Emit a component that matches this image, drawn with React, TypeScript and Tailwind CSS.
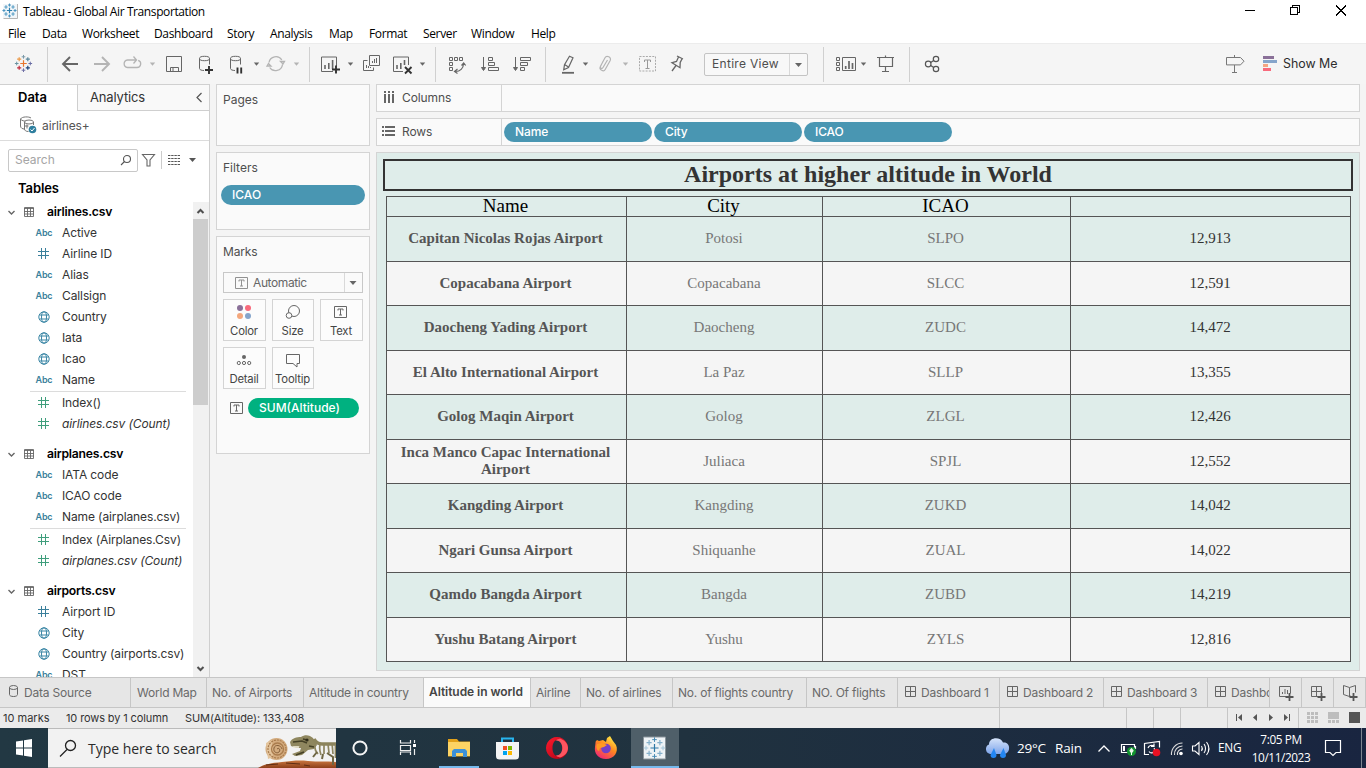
import React from "react";

type Kids = { children?: React.ReactNode };
type BoxProps = Kids & { x: number; y: number; w: number; h: number; className?: string };

/* Drawing slot whose user units are window pixels. */
function Art({ x, y, w, h, className = "", children }: BoxProps) {
  return (
    <svg width={w} height={h} viewBox={`${x} ${y} ${w} ${h}`} className={`block shrink-0 ${className}`} fill="none">
      {children}
    </svg>
  );
}

function Slot({ x, w, children }: Kids & { x: number; w: number }) {
  return (
    <Art x={x} y={44} w={w} h={40}>
      {children}
    </Art>
  );
}

const G = "#666";
const L = "#b4b4b4";

function Caret({ x, y = 64, c = G }: { x: number; y?: number; c?: string }) {
  return <path d={`M${x - 2.7} ${y - 1.5}h5.4l-2.7 3.2z`} fill={c} />;
}

function Sep({ x }: { x: number }) {
  return <path d={`M${x + 0.5} 47v35`} stroke="#d0d0d0" />;
}

function Cross({ x, y, r, c, w = 1 }: { x: number; y: number; r: number; c: string; w?: number }) {
  return <path d={`M${x - r} ${y}h${2 * r}M${x} ${y - r}v${2 * r}`} stroke={c} strokeWidth={w} />;
}

function LogoMark({ x, y, s, colors }: { x: number; y: number; s: number; colors: string[] }) {
  return (
    <g>
      <Cross x={x} y={y} r={3 * s} c={colors[0]} w={1.2} />
      <Cross x={x} y={y - 6.2 * s} r={1.7 * s} c={colors[1]} />
      <Cross x={x} y={y + 6.2 * s} r={1.7 * s} c={colors[2]} />
      <Cross x={x - 6.3 * s} y={y} r={1.7 * s} c={colors[3]} />
      <Cross x={x + 6.3 * s} y={y} r={1.7 * s} c={colors[4]} />
      <Cross x={x - 4 * s} y={y - 4 * s} r={1.9 * s} c={colors[5]} w={1.2} />
      <Cross x={x + 4 * s} y={y - 4 * s} r={1.9 * s} c={colors[6]} w={1.2} />
      <Cross x={x - 4 * s} y={y + 4 * s} r={1.9 * s} c={colors[7]} w={1.2} />
      <Cross x={x + 4 * s} y={y + 4 * s} r={1.9 * s} c={colors[8]} w={1.2} />
    </g>
  );
}

const blues = ["#2d7fb0", "#4b95c0", "#4b95c0", "#4b95c0", "#4b95c0", "#5a9fc6", "#5a9fc6", "#5a9fc6", "#5a9fc6"];
const brand = ["#e8762d", "#7b99a8", "#6f6fa5", "#6b93a0", "#6b6fa5", "#eb9a4a", "#5b879b", "#c02a3c", "#1f447a"];

function TitleBar() {
  return (
    <div className="flex h-[23px] items-center bg-white">
      <Art x={0} y={0} w={23} h={23}>
        <path d="M3 4h14v14h-14z" fill="#f2f6f9" />
        <path d="M17.5 4v14.5h-14" stroke="#b5b5b5" />
        <LogoMark x={9.5} y={10.5} s={0.88} colors={blues} />
      </Art>
      <span className="grow font-['Open_Sans',sans-serif] text-[12px] tracking-[-0.4px] text-black">Tableau - Global Air Transportation</span>
      <Art x={1240} y={0} w={126} h={23} className="[shape-rendering:crispEdges]">
        <g stroke="#000">
          <path d="M1245 10.5h10" />
          <path d="M1290.5 7.5h7v7h-7zM1292.5 7v-1.500h7v7h-1.5" />
          <path d="M1336 5.500l10 10M1346 5.500l-10 10" />
        </g>
      </Art>
    </div>
  );
}

const menus: [string, string][] = [
  ["File", "w-[34px]"],
  ["Data", "w-[40px]"],
  ["Worksheet", "w-[72px]"],
  ["Dashboard", "w-[73px]"],
  ["Story", "w-[43px]"],
  ["Analysis", "w-[59px]"],
  ["Map", "w-[40px]"],
  ["Format", "w-[54px]"],
  ["Server", "w-[48px]"],
  ["Window", "w-[60px]"],
  ["Help", "w-[40px]"],
];

function MenuBar() {
  return (
    <div className="flex h-5 items-center bg-white pt-[2px] pl-2 font-['Open_Sans',sans-serif] text-[12px] tracking-[-0.36px] text-black">
      {menus.map(([m, w]) => (
        <span key={m} className={w}>
          {m}
        </span>
      ))}
    </div>
  );
}

function Toolbar() {
  return (
    <div className="flex h-[41px] items-center border-t border-[#ececec] bg-[#f5f5f5]">
      <Slot x={0} w={48}>
        <LogoMark x={23.500} y={63.5} s={1.08} colors={brand} />
        <Sep x={47} />
      </Slot>
      <Slot x={48} w={38}>
        <path d="M78 64H63M70 57l-7 7 7 7" stroke={G} strokeWidth="1.9" />
      </Slot>
      <Slot x={86} w={30}>
        <path d="M94 64h15M102 57l7 7-7 7" stroke={L} strokeWidth="1.9" />
      </Slot>
      <Slot x={116} w={46}>
        <path d="M131 60h-3.500a4 3.800 0 0 0 0 7.500h9.500a3.700 3.700 0 0 0 1.200-7.200M129 60h7M133.500 56.500l3 3.500-3 3.500" stroke={L} strokeWidth="1.3" />
        <Caret x={152.500} c={L} />
      </Slot>
      <Slot x={162} w={30}>
        <path d="M166.500 56.500h15v15h-15zM170.500 71v-3.500h8v4M173 68v3" stroke={G} />
      </Slot>
      <Slot x={192} w={30}>
        <ellipse cx="204.500" cy="58.500" rx="5" ry="2.200" stroke={G} />
        <path d="M199.500 58.500v10c0 1.200 2 2 4.500 2M209.500 58.500v6" stroke={G} />
        <path d="M205 70h8M209 66v8" stroke="#333" strokeWidth="1.900" />
      </Slot>
      <Slot x={222} w={40}>
        <ellipse cx="235.500" cy="58.500" rx="5" ry="2.200" stroke={G} />
        <path d="M230.500 58.500v10c0 1.200 2 2 4.500 2M240.500 58.500v6" stroke={G} />
        <path d="M237.500 67.500v6M241.200 67.500v6" stroke="#333" strokeWidth="1.900" />
        <Caret x={256.500} />
      </Slot>
      <Slot x={262} w={48}>
        <path d="M269 62.500a7 7 0 0 1 12.800-2.500M282.500 64.500a7 7 0 0 1-12.800 3M280.500 61.500h4l-1.500 2.500zM267 66h4l-2.500-2.500z" stroke={L} strokeWidth="1.300" />
        <Caret x={296.500} c={L} />
        <Sep x={309} />
      </Slot>
      <Slot x={310} w={48}>
        <path d="M333 71.500h-11.500v-14.500h15v9" stroke={G} />
        <path d="M325 69v-4M328.800 69v-6M332.600 69v-9" stroke={G} strokeWidth="1.600" />
        <path d="M332 69.500h8M336 65.500v8" stroke="#333" strokeWidth="1.900" />
        <Caret x={350.500} />
      </Slot>
      <Slot x={358} w={30}>
        <path d="M369.500 55.500h10v10h-10zM367.500 60.500h-4v10h10v-3" stroke={G} />
        <path d="M372.500 63v-2M374.500 63v-4M376.500 63v-5M366.500 68v-3M368.500 68v-2M370.500 68v-1" stroke={G} />
      </Slot>
      <Slot x={388} w={48}>
        <path d="M403 71.500h-9.500v-14.500h15v8" stroke={G} />
        <path d="M397 69v-4M400.800 69v-6M404.500 65v-5" stroke={G} strokeWidth="1.600" />
        <path d="M405 67l6.500 6.500M411.500 67l-6.500 6.500" stroke="#333" strokeWidth="1.900" />
        <Caret x={422.500} />
        <Sep x={435} />
      </Slot>
      <Slot x={436} w={36}>
        <path d="M449.500 57.500h3v3h-3zM454.500 57.500h3v3h-3zM459.500 57.500h3v3h-3zM449.500 62.500h3v3h-3zM449.500 67.500h3v3h-3z" stroke={G} />
        <path d="M455.500 71.500c4.500 0 8-3 8-8M457.500 69l-3 2.500 3 2M461.500 65.500l2.200-2.500 2 2.500" stroke={G} strokeWidth="1.200" />
      </Slot>
      <Slot x={472} w={34}>
        <path d="M483.500 57v13M481.500 67.500h4l-2 3z" stroke={G} fill={G} />
        <path d="M488.500 57.500h4v3h-4zM488.500 62.500h6v3h-6zM488.500 67.500h10v3h-10z" stroke={G} />
      </Slot>
      <Slot x={506} w={40}>
        <path d="M515.500 57v13M513.500 67.500h4l-2 3z" stroke={G} fill={G} />
        <path d="M520.500 57.500h10v3h-10zM520.500 62.500h7v3h-7zM520.500 67.500h4v3h-4z" stroke={G} />
        <Sep x={545} />
      </Slot>
      <Slot x={546} w={48}>
        <path d="M562 72.800h12" stroke={G} strokeWidth="1.800" />
        <path d="M569.500 56.200l3.500 1.600-4.500 9.700-4.800 2.300.8-5zM564.500 64.500l4 2.500" stroke={G} strokeWidth="1.200" />
        <Caret x={585.500} />
      </Slot>
      <Slot x={594} w={38}>
        <path d="M607.500 60l-4.500 7.500c-1 1.800-3.400.5-2.500-1.200l4.500-8.500c1.600-3 6.800-.5 5.200 2.700l-5 9c-1.500 2.700-6.200.3-5-2.500l2.500-5" stroke={L} strokeWidth="1.200" />
        <Caret x={625.500} c={L} />
      </Slot>
      <Slot x={632} w={32}>
        <path d="M639.500 56.500h16v14.500h-16z" stroke="#aaa" strokeDasharray="2 1.200" />
        <path d="M644.500 62v-2h6v2M647.500 60v8M645.500 68.500h4" stroke="#999" />
      </Slot>
      <Slot x={664} w={40}>
        <path d="M677 56l6 3M678.500 57l-2 4.500-4.500 1.200 8 5 .2-5.200 2-4M676 65.500l-4 5.500" stroke={G} strokeWidth="1.300" />
      </Slot>
      <div className="flex h-[23px] w-[104px] shrink-0 items-center rounded-[2px] border border-[#c4c4c4] bg-[#f8f8f8] font-['Inter',sans-serif] text-[12px] text-[#4e4e4e]">
        <span className="w-[83px] pl-[7px] tracking-[0.3px] whitespace-nowrap">Entire View</span>
        <Art x={788} y={53} w={18} h={21}>
          <path d="M789.500 53v21" stroke="#d9d9d9" />
          <path d="M795 62h7l-3.500 4z" fill={G} />
        </Art>
      </div>
      <Slot x={808} w={62}>
        <Sep x={823} />
        <path d="M836.500 57.500h3v3h-3zM836.500 62.500h3v3h-3zM836.500 67.500h3v3h-3zM842.500 57.500h13v13h-13z" stroke={G} />
        <path d="M845.700 69v-3M849 69v-8M852.500 69v-6" stroke={G} strokeWidth="1.700" />
        <Caret x={863.500} />
      </Slot>
      <Slot x={870} w={40}>
        <path d="M877 57.500h17M879.500 57.500v9h13v-9M885.500 55.500v2M885.500 66.500v5M882 71.500h7" stroke={G} strokeWidth="1.200" />
        <Sep x={909} />
      </Slot>
      <Slot x={910} w={40}>
        <g stroke="#555" strokeWidth="1.200">
          <circle cx="928.200" cy="64" r="2.800" />
          <circle cx="936" cy="59" r="2.700" />
          <circle cx="936" cy="69" r="2.700" />
          <path d="M930.700 62.500l3-2M930.700 65.500l3 2" />
        </g>
      </Slot>
      <div className="grow" />
      <Slot x={1216} w={67}>
        <path d="M1234.500 55v2M1226.500 57.500h14l3.500 3.700-3.500 3.700h-14zM1234.500 65v7M1232 72.500h5" stroke="#777" />
        <path d="M1263 56h11v3h-11z" fill="#8a7098" />
        <path d="M1263 60h14v3h-14z" fill="#86a5cb" />
        <path d="M1263 64h5v3h-5z" fill="#f4a582" />
        <path d="M1263 68h8v3h-8z" fill="#f86a7c" />
      </Slot>
      <span className="w-[83px] font-['Inter',sans-serif] text-[12.400px] text-[#2c2c2c]">Show Me</span>
    </div>
  );
}

type Kind = "abc" | "num" | "calc" | "geo";

function FieldIcon({ kind }: { kind: Kind }) {
  if (kind === "abc") return <span className="text-[9px] font-semibold tracking-[-0.2px] text-[#3a7f9b]">Abc</span>;
  if (kind === "geo")
    return (
      <svg width="12" height="12" viewBox="0 0 12 12" fill="none" stroke="#3a86a5" className="mr-px">
        <circle cx="6" cy="6" r="5.200" />
        <ellipse cx="6" cy="6" rx="2.500" ry="5.200" />
        <path d="M1.500 4h9M1.500 8h9" />
      </svg>
    );
  return (
    <svg width="11" height="11" viewBox="0 0 11 11" fill="none" stroke={kind === "num" ? "#3a7f9b" : "#3f9e7c"} className="mr-px">
      <path d="M3.500 0v11M7.500 0v11M0 3.500h11M0 7.500h11" />
    </svg>
  );
}

function Field({ kind, name, italic }: { kind: Kind; name: string; italic?: boolean }) {
  return (
    <div className="flex h-[21px] items-center">
      <span className="ml-[34px] flex w-5 shrink-0 justify-center">
        <FieldIcon kind={kind} />
      </span>
      <span className={`pl-2 tracking-[-0.11px] whitespace-nowrap text-[#333] ${italic ? "italic" : ""}`}>{name}</span>
    </div>
  );
}

type Group = { name: string; fields: [Kind, string][]; calcs: string[] };

const groups: Group[] = [
  {
    name: "airlines.csv",
    fields: [
      ["abc", "Active"],
      ["num", "Airline ID"],
      ["abc", "Alias"],
      ["abc", "Callsign"],
      ["geo", "Country"],
      ["geo", "Iata"],
      ["geo", "Icao"],
      ["abc", "Name"],
    ],
    calcs: ["Index()", "airlines.csv (Count)"],
  },
  {
    name: "airplanes.csv",
    fields: [
      ["abc", "IATA code"],
      ["abc", "ICAO code"],
      ["abc", "Name (airplanes.csv)"],
    ],
    calcs: ["Index (Airplanes.Csv)", "airplanes.csv (Count)"],
  },
  {
    name: "airports.csv",
    fields: [
      ["num", "Airport ID"],
      ["geo", "City"],
      ["geo", "Country (airports.csv)"],
      ["abc", "DST"],
    ],
    calcs: [],
  },
];

function DataPane() {
  return (
    <div className="flex w-[210px] shrink-0 flex-col border-r border-[#cfcfcf] bg-white text-[12px]">
      <div className="flex h-[27px] shrink-0 border-t border-[#d0d0d0]">
        <div className="flex w-[77px] items-center justify-center pr-3 text-[13px] font-semibold text-black">Data</div>
        <div className="flex grow items-center justify-between border-b border-l border-[#cfcfcf] bg-[#f9f9f9] pr-[6px] pl-3 text-[13px] tracking-[-0.15px] text-[#333]">
          Analytics
          <svg width="8" height="11" viewBox="0 0 8 11" fill="none" stroke="#555" strokeWidth="1.200">
            <path d="M6.500 1L2 5.500 6.500 10" />
          </svg>
        </div>
      </div>
      <div className="flex h-[30px] shrink-0 items-center border-b border-[#dcdcdc] tracking-[-0.1px] text-[#555]">
        <Art x={0} y={111} w={42} h={29}>
          <g stroke="#777">
            <path d="M20.500 119v7c0 2 2 3 4 3M31 118c-2-1.600-9-1.600-10.500 1 1.500 2 4 2 5 2" />
            <ellipse cx="29" cy="122" rx="4.500" ry="2" />
            <path d="M24.500 122v7c0 1.500 1.500 2.500 4 2.500M33.500 122v3M24.500 126h4M27 124.500v4" />
          </g>
          <circle cx="32.500" cy="129.500" r="3.800" fill="#2f7f9f" />
          <path d="M30.500 129.500l1.500 1.500 2.500-3" stroke="#fff" />
        </Art>
        airlines+
      </div>
      <div className="flex h-[38px] shrink-0 items-center pl-2">
        <div className="flex h-[23px] w-[130px] items-center justify-between rounded-[2px] border border-[#c8c8c8] pr-1 pl-[6px] text-[#a5a5a5]">
          Search
          <svg width="14" height="14" viewBox="0 0 14 14" fill="none" stroke="#555" strokeWidth="1.100">
            <circle cx="8" cy="6" r="3.500" />
            <path d="M5.500 8.500L2 12" />
          </svg>
        </div>
        <Art x={138} y={148} w={68} h={24}>
          <path d="M142.500 154.500h12l-4.500 5.500v6h-3v-6z" stroke="#666" strokeWidth="1.100" />
          <path d="M161.500 151v18" stroke="#ccc" />
          <path d="M168 155.500h12M168 158.500h12M168 161.500h12M168 164.500h12" stroke="#555" strokeDasharray="2.400 .8" />
          <path d="M189 158h7l-3.500 4z" fill="#555" />
        </Art>
      </div>
      <div className="h-[23px] shrink-0 pl-[18px] text-[13px] leading-[19px] font-semibold tracking-[-0.1px] text-black">Tables</div>
      <div className="flex min-h-0 grow">
        <div className="w-[193px] shrink-0 overflow-hidden">
          {groups.map((g) => (
            <div key={g.name} className="pb-[10px]">
              <div className="flex h-5 items-center text-[12.200px] font-semibold tracking-[-0.22px] text-black">
                <svg width="47" height="20" viewBox="0 0 47 20" fill="none" stroke="#666" className="shrink-0">
                  <path d="M8.500 9l3 3 3-3" strokeWidth="1.400" />
                  <path d="M24.500 5.500h9v9h-9zM24 6.500h10M24 9.500h10M24 12h10M27.500 6v8.500M30.500 6v8.500" strokeWidth=".9" />
                </svg>
                {g.name}
              </div>
              {g.fields.map(([k, n]) => (
                <Field key={n} kind={k} name={n} />
              ))}
              {g.calcs.length > 0 && <div className="ml-[30px] h-[2px] w-[156px] border-b border-[#dcdcdc]" />}
              {g.calcs.map((n, i) => (
                <Field key={n} kind="calc" name={n} italic={i === 1} />
              ))}
            </div>
          ))}
        </div>
        <div className="flex w-4 flex-col bg-[#f1f1f1]">
          <svg width="16" height="17" viewBox="0 0 16 17" fill="none" stroke="#505050" strokeWidth="2">
            <path d="M4.500 11L7.500 8l3 3" />
          </svg>
          <div className="h-[186px] w-[15px] bg-[#cdcdcd]" />
          <div className="grow" />
          <svg width="16" height="17" viewBox="0 0 16 17" fill="none" stroke="#505050" strokeWidth="2">
            <path d="M4.500 7L7.500 10l3-3" />
          </svg>
        </div>
      </div>
    </div>
  );
}

function TBox() {
  return (
    <svg width="13" height="12" viewBox="0 0 13 12" fill="none" stroke="#666" className="shrink-0">
      <path d="M.5.5h12v11h-12zM4 4.500v-1.500h5v1.500M6.500 3v6M5 9h3" />
    </svg>
  );
}

function MarkButton({ label, children }: Kids & { label: string }) {
  return (
    <div className="flex h-[42px] flex-col items-center justify-end border border-[#d4d4d4] bg-[#fcfcfc] pr-px pb-[2px] text-[11.300px] leading-[14px] tracking-[-0.2px] text-[#444]">
      <svg width="18" height="18" viewBox="0 0 18 18" fill="none" stroke="#666" className="mb-[3px]">
        {children}
      </svg>
      {label}
    </div>
  );
}

function Shelves() {
  return (
    <div className="ml-[6px] flex w-[154px] shrink-0 flex-col gap-[6px] text-[12px] text-[#4e4e4e]">
      <div className="h-[62px] border border-[#d4d4d4] bg-[#fafafa] pt-[6px] pl-[6px]">Pages</div>
      <div className="h-[78px] border border-[#d4d4d4] bg-[#fafafa] pt-[6px]">
        <div className="h-[26px] pl-[6px]">Filters</div>
        <div className="ml-1 h-5 w-[144px] rounded-full bg-[#4996b2] pl-[11px] text-[12px] leading-[20px] font-medium text-white">ICAO</div>
      </div>
      <div className="h-[218px] border border-[#d4d4d4] bg-[#fafafa] pt-[6px] pl-[6px]">
        <div className="h-[29px] tracking-[-0.15px]">Marks</div>
        <div className="mb-[6px] flex h-[21px] w-[140px] items-center border border-[#c8c8c8] pl-[11px] text-[#666]">
          <span className="mr-[5px] opacity-70">
            <TBox />
          </span>
          <span className="w-[91px] tracking-[-0.4px]">Automatic</span>
          <svg width="18" height="19" viewBox="0 0 18 19" className="shrink-0">
            <path d="M.5 0v19" stroke="#d9d9d9" />
            <path d="M5.500 8h7l-3.500 4z" fill="#666" />
          </svg>
        </div>
        <div className="grid w-[140px] grid-cols-[43px_42px_43px] gap-x-[6px] gap-y-[6px]">
          <MarkButton label="Color">
            <g stroke="none">
              <circle cx="5" cy="5" r="3" fill="#8a7098" />
              <circle cx="13" cy="5" r="3" fill="#f86a7c" />
              <circle cx="5" cy="13" r="3" fill="#f4a77c" />
              <circle cx="13" cy="13" r="3" fill="#86a5cb" />
            </g>
          </MarkButton>
          <MarkButton label="Size">
            <circle cx="10" cy="8" r="5.500" />
            <circle cx="5" cy="12.500" r="2.800" fill="#fcfcfc" />
          </MarkButton>
          <MarkButton label="Text">
            <path d="M2.500 3.500h12v11h-12zM6 7.500v-1.500h5v1.500M8.500 6v6M7 12h3" />
          </MarkButton>
          <MarkButton label="Detail">
            <circle cx="9" cy="6" r="2" fill="#666" stroke="none" />
            <circle cx="3.800" cy="12" r="1.600" />
            <circle cx="9" cy="12" r="1.600" />
            <circle cx="14.200" cy="12" r="1.600" />
          </MarkButton>
          <MarkButton label="Tooltip">
            <path d="M2.500 3.500h13v9h-2.500v3.500l-4-3.500h-6.500z" />
          </MarkButton>
        </div>
        <div className="mt-[9px] flex h-5 items-center pl-[7px]">
          <TBox />
          <div className="ml-[5px] h-5 w-[111px] rounded-full bg-[#00b180] pl-[11px] leading-[20px] font-medium whitespace-nowrap text-white">SUM(Altitude)</div>
        </div>
      </div>
    </div>
  );
}

const rows: string[][] = [
  ["Capitan Nicolas Rojas Airport", "Potosi", "SLPO", "12,913"],
  ["Copacabana Airport", "Copacabana", "SLCC", "12,591"],
  ["Daocheng Yading Airport", "Daocheng", "ZUDC", "14,472"],
  ["El Alto International Airport", "La Paz", "SLLP", "13,355"],
  ["Golog Maqin Airport", "Golog", "ZLGL", "12,426"],
  ["Inca Manco Capac International Airport", "Juliaca", "SPJL", "12,552"],
  ["Kangding Airport", "Kangding", "ZUKD", "14,042"],
  ["Ngari Gunsa Airport", "Shiquanhe", "ZUAL", "14,022"],
  ["Qamdo Bangda Airport", "Bangda", "ZUBD", "14,219"],
  ["Yushu Batang Airport", "Yushu", "ZYLS", "12,816"],
];

function Viz() {
  return (
    <div className="h-[519px] border border-[#d4d4d4] bg-[#dfedea] px-[6px] pt-[6px] font-['Liberation_Serif',serif]">
      <div className="h-8 w-[970px] border-2 border-[#333] text-center text-[24px] leading-[27px] font-bold text-[#333]">Airports at higher altitude in World</div>
      <div className="mt-[5px] ml-[3px] w-[965px] border-r border-b border-[#555]">
        <div className="grid h-5 grid-cols-[240px_196px_248px_280px] text-center text-[19px] leading-[17px] text-black">
          {["Name", "City", "ICAO", ""].map((h, i) => (
            <div key={i} className="border-t border-l border-[#555] pr-[2px]">
              {h}
            </div>
          ))}
        </div>
        {rows.map((r, i) => (
          <div
            key={r[0]}
            className={`grid grid-cols-[240px_196px_248px_280px] text-center text-[15px] leading-[17px] ${i % 2 === 0 ? "h-[45px]" : "h-[44px] bg-[#f5f5f5]"}`}
          >
            <div className={`flex items-center justify-center border-t border-l border-[#555] pr-[14px] pl-3 font-bold text-[#555] ${i % 2 === 0 ? "pb-[2px]" : i === 5 ? "pb-px" : ""}`}>
              {r[0]}
            </div>
            <div className={`flex items-center justify-center border-t border-l border-[#555] pr-px text-[#777] ${i % 2 === 0 ? "pb-[2px]" : ""}`}>{r[1]}</div>
            <div className={`flex items-center justify-center border-t border-l border-[#555] pr-[2px] text-[#777] ${i % 2 === 0 ? "pb-[2px]" : ""}`}>{r[2]}</div>
            <div className={`flex items-center justify-center border-t border-l border-[#555] pr-px text-[#333] ${i % 2 === 0 ? "pb-[2px]" : ""}`}>{r[3]}</div>
          </div>
        ))}
      </div>
    </div>
  );
}

function Worksheet() {
  return (
    <div className="ml-[6px] flex w-[984px] shrink-0 flex-col gap-[6px] text-[12px] text-[#4e4e4e]">
      <div className="flex h-7 border border-[#d4d4d4] bg-[#fafafa]">
        <div className="flex w-[125px] items-center border-r border-[#d4d4d4] tracking-[-0.1px]">
          <Art x={377} y={85} w={25} h={26}>
            <path d="M385 91v12M389 91v12M393 91v12" stroke="#666" strokeWidth="2" />
            <path d="M383 93.500h12" stroke="#fafafa" />
          </Art>
          Columns
        </div>
      </div>
      <div className="flex h-7 items-center border border-[#d4d4d4] bg-[#fafafa]">
        <div className="flex h-full w-[125px] items-center border-r border-[#d4d4d4] tracking-[-0.1px]">
          <Art x={377} y={119} w={25} h={26}>
            <path d="M382 127h13M382 131h13M382 135h13" stroke="#666" strokeWidth="2" />
            <path d="M384.500 126v10" stroke="#fafafa" />
          </Art>
          Rows
        </div>
        <div className="flex gap-[2px] pl-[2px] font-medium text-white">
          {["Name", "City", "ICAO"].map((p) => (
            <div key={p} className="h-5 w-[148px] rounded-full bg-[#4996b2] pl-[11px] leading-[19px] tracking-[-0.1px]">
              {p}
            </div>
          ))}
        </div>
      </div>
      <Viz />
    </div>
  );
}

function GridIcon() {
  return (
    <svg width="11" height="11" viewBox="0 0 11 11" fill="none" stroke="#666" className="mr-[5px] mb-[2px] shrink-0">
      <path d="M.5.5h10v10h-10zM5.500 0v11M0 5.500h11" />
    </svg>
  );
}

const tabs: [string, string][] = [
  ["World Map", "w-[76px]"],
  ["No. of Airports", "w-[97px]"],
  ["Altitude in country", "w-[120px]"],
  ["Altitude in world", "w-[107px]"],
  ["Airline", "w-[50px]"],
  ["No. of airlines", "w-[92px]"],
  ["No. of flights country", "w-[134px]"],
  ["NO. Of flights", "w-[91px]"],
];

const dashboards: [string, string][] = [
  ["Dashboard 1", "w-[102px]"],
  ["Dashboard 2", "w-[104px]"],
  ["Dashboard 3", "w-[104px]"],
  ["Dashboard 4", "w-[62px]"],
];

function SheetTabs() {
  return (
    <div className="flex h-[31px] shrink-0 border-y border-[#c6c6c6] bg-[#e6e6e6] text-[12px] whitespace-nowrap text-[#6a6a6a]">
      <div className="flex w-[131px] items-center border-r border-[#c6c6c6] pl-[9px] tracking-[-0.2px]">
        <svg width="9" height="12" viewBox="0 0 9 12" fill="none" stroke="#666" className="mr-[6px] mb-[3px]">
          <ellipse cx="4.500" cy="2.500" rx="4" ry="2" />
          <path d="M.5 2.500v7c0 1.200 1.500 2 4 2s4-.8 4-2v-7" />
        </svg>
        Data Source
      </div>
      {tabs.map(([t, w], i) => (
        <div
          key={t}
          className={`flex shrink-0 items-center border-r border-[#c6c6c6] ${i === 0 ? "pl-[6px]" : "pl-[5px]"} ${w} ${
            i === 3 ? "bg-[#fafafa] pb-[2px] font-semibold tracking-[-0.06px] text-[#444]" : "tracking-[-0.22px]"
          }`}
        >
          {t}
        </div>
      ))}
      {dashboards.map(([t, w]) => (
        <div key={t} className={`flex shrink-0 items-center overflow-hidden border-r border-[#c6c6c6] pl-[7px] tracking-[-0.22px] ${w}`}>
          <GridIcon />
          {t}
        </div>
      ))}
      <Art x={1270} y={678} w={96} h={29}>
        <g stroke="#666">
          <path d="M1301.500 678v29M1333.500 678v29M1365.500 678v29" stroke="#c6c6c6" />
          <path d="M1288 696.500h-8.500v-10h11v7M1282.500 694v-2M1285 694v-5M1287.500 694v-4" />
          <path d="M1320 696.500h-8.500v-10h10v7M1311.500 691.500h10M1316.500 686.500v10" />
          <path d="M1351 696l-1.500.5-6-2v-9l6 2 6-2v7M1349.500 687.500v9" />
          <path d="M1285.500 697h8M1289.500 693v8M1317.500 697h8M1321.500 693v8M1349.500 697h8M1353.500 693v8" stroke="#555" strokeWidth="1.800" />
        </g>
      </Art>
    </div>
  );
}

function StatusBar() {
  return (
    <div className="flex h-5 shrink-0 items-center bg-[#ebebeb] pl-[3px] text-[11px] whitespace-nowrap text-[#333]">
      <span className="w-[63px]">10 marks</span>
      <span className="w-[119px] tracking-[-0.12px]">10 rows by 1 column</span>
      <span className="grow tracking-[-0.08px]">SUM(Altitude): 133,408</span>
      <Art x={990} y={708} w={376} h={20}>
        <path d="M999.500 708v20M1126.500 708v20M1153.500 708v20M1180.500 708v20M1227.500 708v20M1298.500 708v20" stroke="#c6c6c6" />
        <g fill="#555">
          <path d="M1236 714h1v7h-1zM1242 714v7l-4-3.500zM1257 714v7l-4-3.500zM1269 714v7l4-3.500zM1284 714v7l4-3.500zM1289 714h1v7h-1z" />
          <path d="M1349 712h11v11h-11z" />
        </g>
        <g fill="#bdbdbd">
          <path d="M1307 712h3v3h-3zM1311 712h3v3h-3zM1315 712h3v3h-3zM1307 716h3v3h-3zM1311 716h3v3h-3zM1315 716h3v3h-3zM1307 720h3v3h-3zM1311 720h3v3h-3zM1315 720h3v3h-3z" />
          <path d="M1328 712h11v7h-11zM1328 720h3v3h-3zM1332 720h3v3h-3zM1336 720h3v3h-3z" />
        </g>
      </Art>
    </div>
  );
}

function SearchArt() {
  return (
    <Art x={258} y={729} w={78} h={39}>
      <defs>
        <linearGradient id="rock" x1="0" y1="0" x2="0" y2="1">
          <stop offset="0" stopColor="#c9763f" />
          <stop offset="1" stopColor="#8c3f1a" />
        </linearGradient>
      </defs>
      <path d="M258 768c6-4 14-5 24-6s16-2 26-1 18 0 28 1v6z" fill="url(#rock)" />
      <path d="M266 765l12-1M286 763l14 1M304 765l6 1" stroke="#5e2c12" />
      <circle cx="276.500" cy="749" r="11" fill="#d3ab7e" />
      <path d="M266 743l6-3 1 17-5 2z" fill="#e3c49c" />
      <circle cx="277" cy="749" r="9" stroke="#a87a4c" strokeWidth="1.200" strokeDasharray="2 1" />
      <circle cx="277.500" cy="749" r="6" stroke="#aa7c4d" strokeWidth="1.300" />
      <path d="M277 749c2-2 4 1 2 3s-6 0-5-4 7-3 8 1" stroke="#86603a" />
      <path d="M290 742c2-4 7-5 11-5 4-3 9-2 12 1l4 7-3 4-6 1c-2 2-4 3-6 5l-7 1-3-2 8-3 1-3-5 0-5-2z" fill="#8f875f" />
      <path d="M293 742l9-1 5 2M296 755l8-3M303 739l4 1M309 746l5 1" stroke="#454126" strokeWidth="1.500" />
      <circle cx="307" cy="740" r="1.600" fill="#2e2b18" />
      <path d="M293 746l1 2 1-2 1 2 1-2 1 2 1-2" stroke="#f2eedc" />
      <path d="M314 739c2 4 4 5 8 5h14" stroke="#8c845c" strokeWidth="3.500" />
      <path d="M316 743c-2 4-1 8 2 11M320 745c-1 4 0 7 1 10M324 745v9M328 744l1 9M332 743l1 11M335.500 743v15" stroke="#8d855f" strokeWidth="1.700" />
      <path d="M317 752l-4 5M327 753l6 4 0 8M323 754l-1 5" stroke="#6f6744" strokeWidth="2" />
    </Art>
  );
}

function TaskbarApps() {
  return (
    <Art x={336} y={728} w={343} h={40}>
      <defs>
        <linearGradient id="opera" x1="0" y1="0" x2="1" y2="1">
          <stop offset="0" stopColor="#ff1b2d" />
          <stop offset="1" stopColor="#a70014" />
        </linearGradient>
        <linearGradient id="fox" x1="0.800" y1="0" x2="0.200" y2="1">
          <stop offset="0" stopColor="#fff04a" />
          <stop offset=".45" stopColor="#ff8a1e" />
          <stop offset="1" stopColor="#f0207a" />
        </linearGradient>
      </defs>
      <circle cx="360" cy="748" r="6.600" stroke="#f5f5f5" strokeWidth="2" />
      <path d="M400.500 740v3h10v-3M400.500 755v-3h10v3M400.500 745.500h10v5h-10zM414.500 740v3M414.500 749v6" stroke="#eee" strokeWidth="1.200" />
      <path d="M413 744h3v3h-3z" fill="#fff" />
      <path d="M448 739h9l2 2.500h11v15h-22z" fill="#e2a11a" />
      <path d="M448 742h22v14h-22z" fill="#fcd364" />
      <path d="M452 757v-6l2-2h11l2 2v6h-4v-4h-7v4z" fill="#3d91d8" />
      <path d="M502 743v-4.500h11v4.500" stroke="#28b5ef" strokeWidth="2" />
      <path d="M496 742h23v14a3.500 3.500 0 0 1-3.500 3.500h-16a3.500 3.500 0 0 1-3.500-3.500z" fill="#f4f4f4" />
      <path d="M503 746h4v4h-4z" fill="#f25022" />
      <path d="M508 746h4v4h-4z" fill="#7fba00" />
      <path d="M503 751h4v4h-4z" fill="#00a4ef" />
      <path d="M508 751h4v4h-4z" fill="#ffb900" />
      <path d="M557 737a11 11 0 1 0 .01 0zM557.500 740c3 0 4.800 3.500 4.800 8s-1.800 8-4.800 8-5-3.500-5-8 2-8 5-8z" fill="url(#opera)" fillRule="evenodd" />
      <path d="M560 738.500c4 1.500 8 4.500 8 9.500s-4 8.500-8 9.500c-2-.5-3-1-4-2 4 0 6.300-3.500 6.300-7.500s-2.300-7.500-6.300-7.500c1-1 2.500-1.500 4-2z" fill="#ff5560" />
      <path d="M597 740l2 1 4-1 3 2 1-4 3-2 3 5 3 4c3 7-2 14-10 14s-12-6-11-12 0-5 2-7z" fill="url(#fox)" />
      <circle cx="606" cy="748.500" r="4.800" fill="#7340c8" />
      <path d="M597 744l5-1 5 2-3 2-4 1-1 3c-3-1-3-5-2-7z" fill="#ff9a22" />
      <path d="M631 728h48v40h-48z" fill="#4f5f69" />
      <path d="M643.500 737h22v22h-22z" fill="#eef3f6" stroke="#8a949b" />
      <LogoMark x={654.500} y={748} s={1.350} colors={["#2d77a5", "#4b8db6", "#4b8db6", "#a4c6da", "#a4c6da", "#84b0cb", "#84b0cb", "#84b0cb", "#84b0cb"]} />
      <path d="M439 766h40v2h-40zM631 766h48v2h-48z" fill="#76b9ed" />
    </Art>
  );
}

function Taskbar() {
  return (
    <div className="flex h-10 shrink-0 items-center bg-linear-to-r from-[#223843] via-[#20323f] to-[#192540] font-['Open_Sans',sans-serif] whitespace-nowrap text-white">
      <Art x={0} y={728} w={48} h={40}>
        <path d="M16 741.500l7-1v7h-7zM24 740.300l8-1.200v8.400h-8zM16 748.500h7v7l-7-1zM24 748.500h8v8.400l-8-1.200z" fill="#fff" />
      </Art>
      <div className="flex h-10 w-72 shrink-0 items-center border-t border-b border-[#bbb] bg-[#f2f2f2] text-[14px] text-[#2b2b2b]">
        <Art x={48} y={729} w={40} h={38}>
          <circle cx="70.500" cy="745.500" r="5" stroke="#222" strokeWidth="1.300" />
          <path d="M67 749.500l-7 7" stroke="#222" strokeWidth="1.300" />
        </Art>
        <span className="w-[170px] tracking-[-0.02px]">Type here to search</span>
        <SearchArt />
      </div>
      <TaskbarApps />
      <div className="grow" />
      <Art x={980} y={728} w={38} h={40}>
        <defs>
          <linearGradient id="cloud" x1="0" y1="0" x2="0" y2="1">
            <stop offset="0" stopColor="#d5e3fa" />
            <stop offset="1" stopColor="#7ea5ea" />
          </linearGradient>
        </defs>
        <path d="M991 754a5 5 0 0 1-1-9.500c0-8 12-8 14-2 8-1 8 11 1 11.500z" fill="url(#cloud)" />
        <path d="M995 748l-3.500 7a3 3 0 1 0 6 0zM1004.500 748l-3.500 7a3 3 0 1 0 6 0z" fill="#2386f2" />
      </Art>
      <span className="w-[38px] text-[13.500px] tracking-[-0.2px]">29°C</span>
      <span className="w-[36px] text-[13.500px] tracking-[-0.2px]">Rain</span>
      <Art x={1092} y={728} w={127} h={40}>
        <path d="M1099.500 751.500l5.500-5.500 5.500 5.500" stroke="#fff" strokeWidth="1.300" />
        <path d="M1130 752.500h-7.500v-8h13v3M1136.500 746v3" stroke="#fff" strokeWidth="1.200" />
        <path d="M1124 746h2v5h-2z" fill="#fff" />
        <circle cx="1132.500" cy="751.500" r="4.500" fill="#12932f" />
        <path d="M1132.500 755v-4" stroke="#fff" />
        <path d="M1132.500 747.800l2.200 2.700-1 2h-2.400l-1-2z" fill="#e8f6ea" />
        <path d="M1150 754.500h-4.500v-11l15-2v6M1149 748a4 4 0 0 1 6-2M1155 748a3 3 0 0 1-5 3.500M1155 743.500v3h-3" stroke="#fff" strokeWidth="1.200" />
        <circle cx="1157.500" cy="752.500" r="3.800" fill="#e81123" />
        <path d="M1172.500 755a11 11 0 0 1 11-12M1175.500 755a8 8 0 0 1 8-9M1178.500 755a5 5 0 0 1 5-6" stroke="#ddd" strokeWidth="1.100" />
        <circle cx="1182" cy="753.500" r="1.800" fill="#fff" />
        <path d="M1193.500 746h2.500l4-3.500v12l-4-3.500h-2.500zM1202.500 746c1 1.500 1 3.500 0 5M1205 744c2 2.500 2 6.500 0 9M1207.500 742c3 4 3 9 0 13" stroke="#fff" strokeWidth="1.100" />
      </Art>
      <span className="w-[31px] text-[11.800px] tracking-[-0.2px]">ENG</span>
      <div className="w-[64px] text-center text-[11.800px] leading-[18px] tracking-[-0.4px]">
        7:05 PM
        <br />
        10/11/2023
      </div>
      <Art x={1313} y={728} w={53} h={40}>
        <path d="M1325.500 740.500h15v12h-4.500l-3 3-3-3h-4.500z" stroke="#fff" strokeWidth="1.200" />
        <path d="M1361.500 728v40" stroke="#7d8590" />
      </Art>
    </div>
  );
}

export default function App() {
  return (
    <div className="flex h-[768px] w-[1366px] flex-col overflow-hidden bg-[#f4f4f4] font-['Inter',sans-serif]">
      <TitleBar />
      <MenuBar />
      <Toolbar />
      <div className="flex h-[593px] shrink-0">
        <DataPane />
        <Shelves />
        <Worksheet />
      </div>
      <SheetTabs />
      <StatusBar />
      <Taskbar />
    </div>
  );
}
